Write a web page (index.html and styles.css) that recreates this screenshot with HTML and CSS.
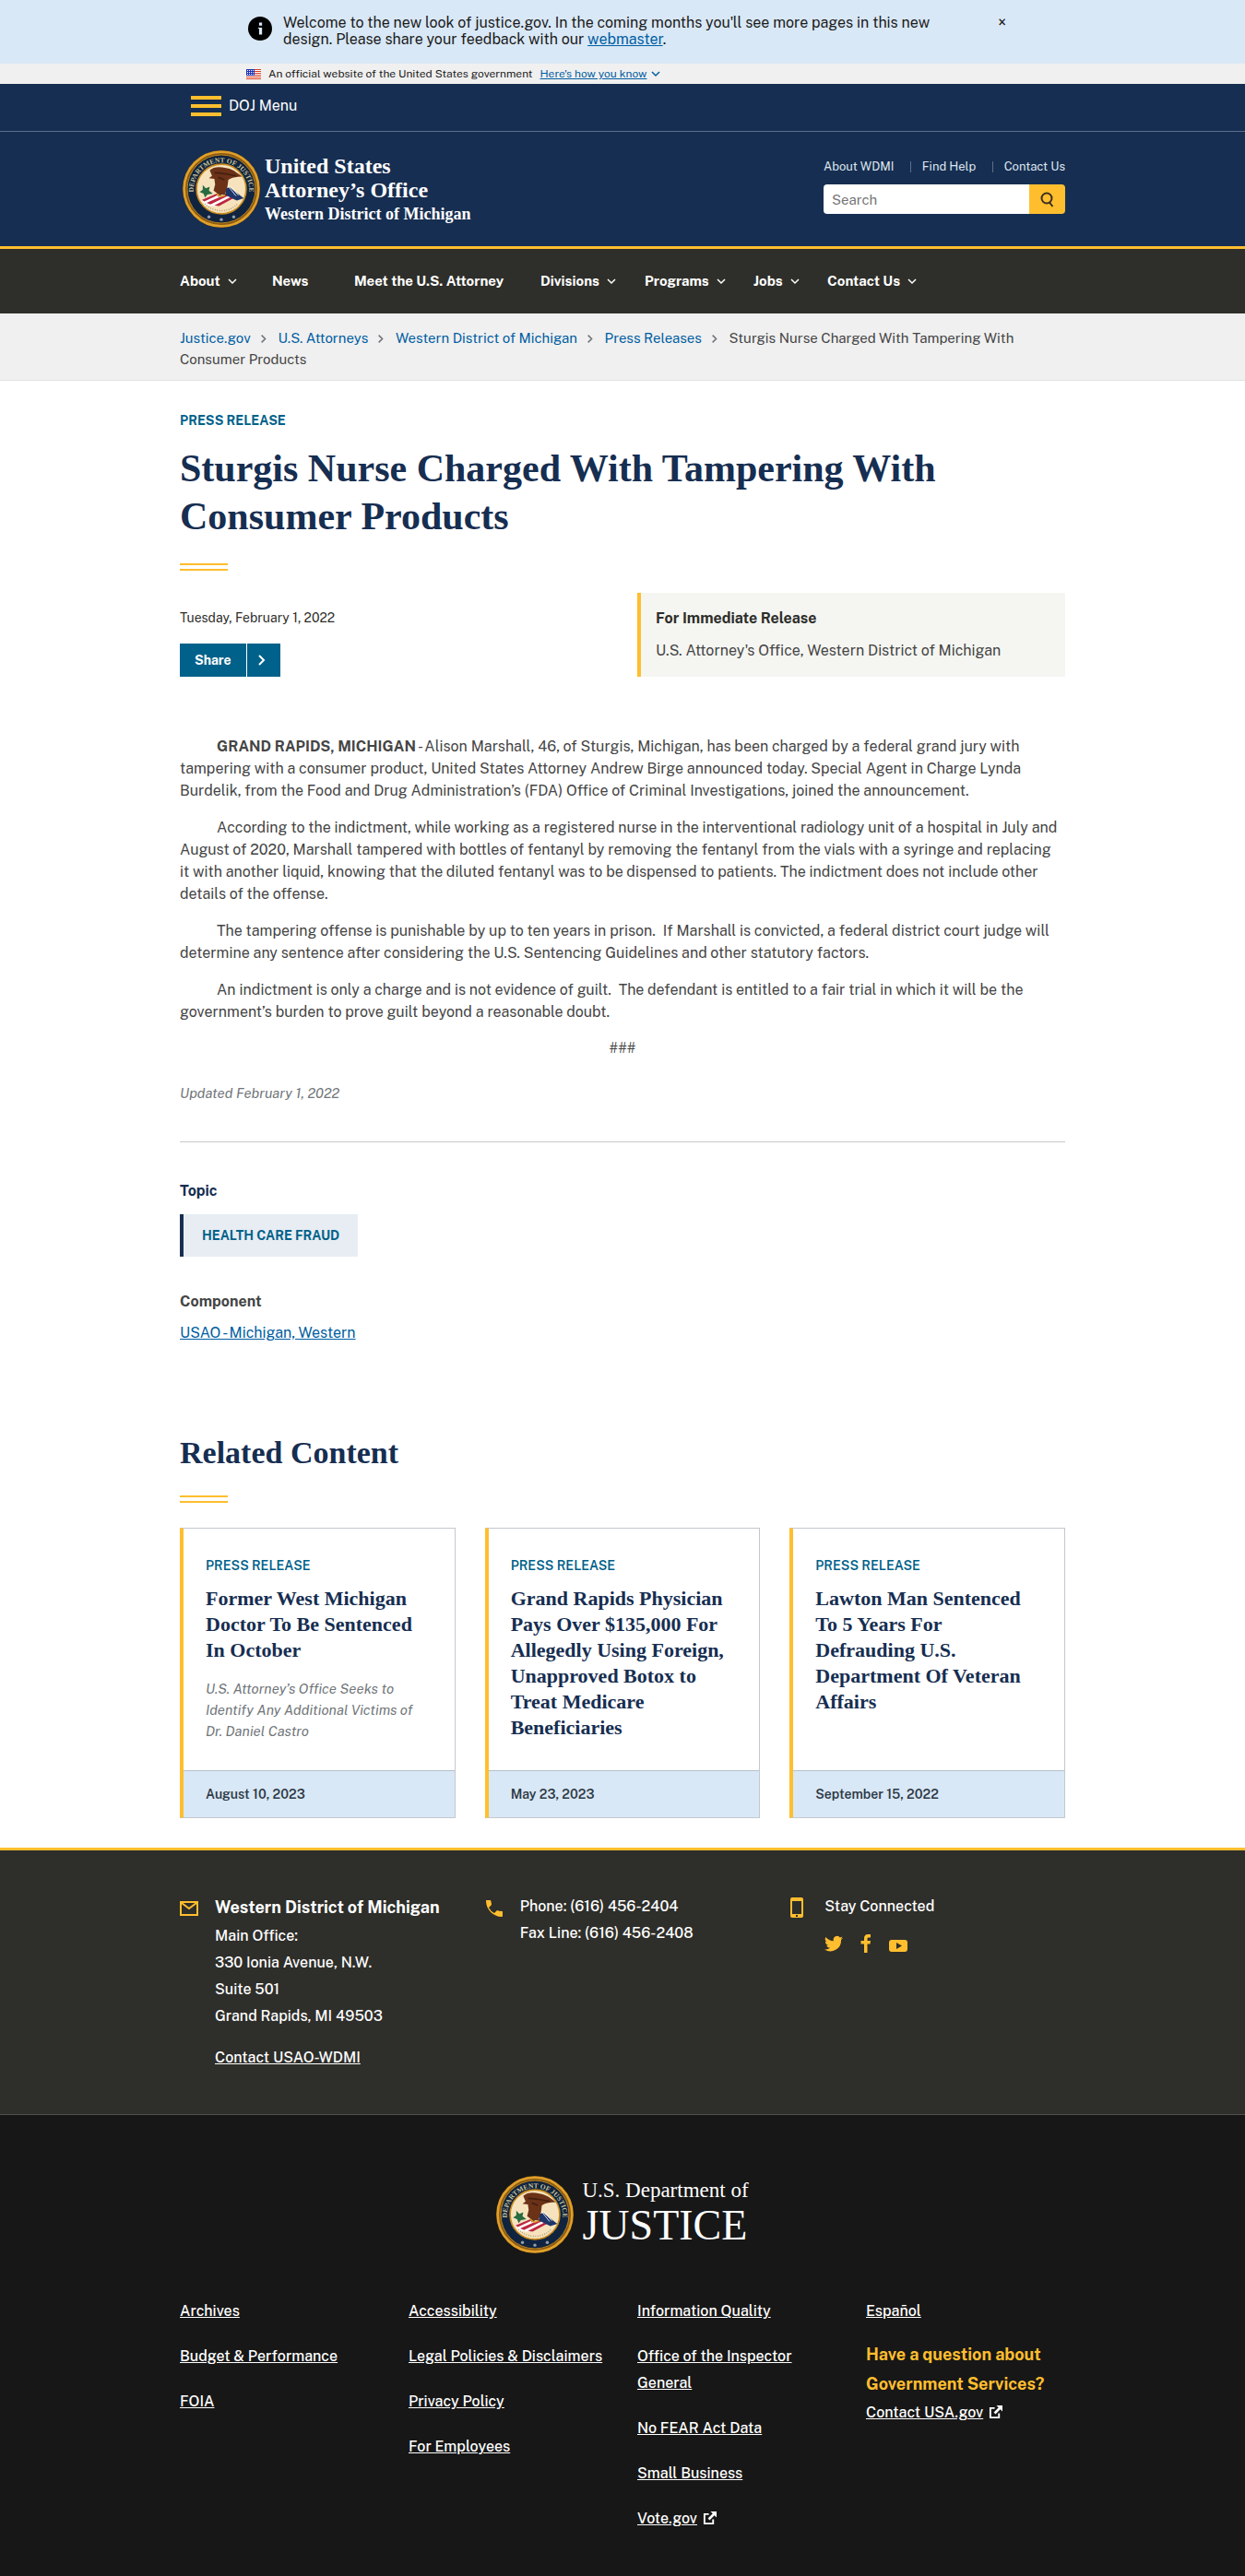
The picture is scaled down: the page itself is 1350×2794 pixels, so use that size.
FILE: index.html
```html
<!DOCTYPE html>
<html lang="en">
<head>
<meta charset="utf-8">
<meta name="viewport" content="width=device-width, initial-scale=1">
<title>Western District of Michigan | Sturgis Nurse Charged With Tampering With Consumer Products | United States Department of Justice</title>
<link rel="stylesheet" href="styles.css">
</head>
<body>
<svg class="sprite" aria-hidden="true">
  <symbol id="down" viewBox="0 0 10 10"><path d="M1 3l4 4 4-4" fill="none" stroke="currentColor" stroke-width="1.500"/></symbol>
  <symbol id="right" viewBox="0 0 10 14"><path d="M2 2l5 5-5 5" fill="none" stroke="currentColor" stroke-width="2"/></symbol>
  <symbol id="external" viewBox="0 0 16 16"><path d="M7 3H2v11h10V9" fill="none" stroke="currentColor" stroke-width="2"/><path d="M9 0h7v7l-2.500-2.500L8 10 6 8l5.500-5.500z" fill="currentColor"/></symbol>
</svg>

<div class="notice" role="region" aria-label="Site notice">
  <svg class="notice-icon" viewBox="0 0 24 24" aria-hidden="true"><circle cx="12" cy="12" r="12" fill="#000"/><path d="M11 6h3v3h-3zM10 11h4v7h-3v-6h-1z" fill="#d9e8f6"/></svg>
  <p class="notice-text">Welcome to the new look of justice.gov. In the coming months you'll see more pages in this new design. Please share your feedback with our <a href="#">webmaster</a>.</p>
  <button class="notice-close" type="button" aria-label="Close">×</button>
</div>

<div class="gov">
  <div class="gov-inner">
    <svg class="flag" viewBox="0 0 16 11" aria-hidden="true"><path fill="#fff" d="M0 0h16v11H0z"/><path fill="#db3e1f" d="M0 0h16v1H0zM0 2h16v1H0zM0 4h16v1H0zM0 6h16v1H0zM0 8h16v1H0zM0 10h16v1H0z"/><path fill="#1e33b1" d="M0 0h9v7H0z"/><path d="M1 1.500h8M1 3.500h8M1 5.500h8" stroke="#fff" stroke-width="1" stroke-dasharray="1 1"/></svg>
    <span>An official website of the United States government</span>
    <button class="gov-toggle" type="button"><span>Here's how you know</span><svg class="chev" aria-hidden="true"><use href="#down"/></svg></button>
  </div>
</div>

<header class="header">
  <div class="menubar">
    <div class="wrap">
      <button class="menu-button" type="button"><span class="burger"></span>DOJ Menu</button>
    </div>
  </div>
  <div class="wrap masthead">
    <a class="brand" href="#">
      <svg class="seal" viewBox="0 0 100 100" aria-hidden="true">
        <g id="seal">
          <circle cx="50" cy="50" r="50" fill="#8a5a12"/>
          <circle cx="50" cy="50" r="48" fill="none" stroke="#e0a02a" stroke-width="3"/>
          <circle cx="50" cy="50" r="44" fill="#10243f" stroke="#c98b1f" stroke-width="1"/>
          <circle cx="50" cy="50" r="32" fill="#f6e3bd" stroke="#c98b1f" stroke-width="2"/>
          <path id="seal-arc" d="M15.500 62 A36 36 0 1 1 84.500 62" fill="none"/>
          <text class="seal-text"><textPath href="#seal-arc" startOffset="50%" text-anchor="middle">DEPARTMENT OF JUSTICE</textPath></text>
          <circle cx="34" cy="86" r="2" fill="#93a0b5"/><circle cx="50" cy="89.500" r="2" fill="#93a0b5"/><circle cx="66" cy="86" r="2" fill="#93a0b5"/>
          <path d="M26 45l4 4 5-2-1 5 5 4-7 1-3 4-2-5-5-2 4-3z" fill="#276b42"/>
          <path d="M25 64l28-12 16 7-26 13-14-1z" fill="#fff"/>
          <path d="M25 64l26-11 3 1-26 12zM31 68l27-12 4 1-26 13zM41 71l24-12 4 1-22 12z" fill="#bd2740"/>
          <path d="M54 49l7-1 18 14-9 3-14-7z" fill="#1d3568"/>
          <path d="M57 44l12 15M62 47l10 11" stroke="#fff" stroke-width="1"/>
          <path d="M35 26c5-5 13-5 21-3 8 1 15 6 21 11-7 0-13 1-18 4l-1 8-3 9 2 4-6-2-5 3-2-5-4-3 2-8-1-7-7-1 4-3z" fill="#6b3218"/>
          <path d="M41 29c9 0 18 2 28 4M46 35l8 3" stroke="#43200f" stroke-width="2" fill="none"/>
          <path d="M44 56l5 4 6-2" stroke="#d79a2e" stroke-width="2" fill="none"/>
          <path d="M29 69c10 12 32 12 42 0" stroke="#a9986d" stroke-width="2" stroke-dasharray="1 2" fill="none"/>
        </g>
      </svg>
      <span class="brand-name">United States<br>Attorney’s Office<span class="brand-district">Western District of Michigan</span></span>
    </a>
    <div class="tools">
      <ul class="quick">
        <li><a href="#">About WDMI</a></li>
        <li><a href="#">Find Help</a></li>
        <li><a href="#">Contact Us</a></li>
      </ul>
      <form class="search" role="search">
        <input type="search" placeholder="Search" aria-label="Search">
        <button type="submit" aria-label="Search"><svg viewBox="0 0 16 18" aria-hidden="true"><circle cx="7" cy="7" r="5.500" fill="none" stroke="#3a2f20" stroke-width="2"/><path d="M9.500 11l4 5" stroke="#3a2f20" stroke-width="2"/></svg></button>
      </form>
    </div>
  </div>
</header>

<nav class="nav" aria-label="Primary">
  <ul class="wrap nav-list">
    <li><button type="button">About<svg class="chev" aria-hidden="true"><use href="#down"/></svg></button></li>
    <li><a href="#">News</a></li>
    <li><a href="#">Meet the U.S. Attorney</a></li>
    <li><button type="button">Divisions<svg class="chev" aria-hidden="true"><use href="#down"/></svg></button></li>
    <li><button type="button">Programs<svg class="chev" aria-hidden="true"><use href="#down"/></svg></button></li>
    <li><button type="button">Jobs<svg class="chev" aria-hidden="true"><use href="#down"/></svg></button></li>
    <li><button type="button">Contact Us<svg class="chev" aria-hidden="true"><use href="#down"/></svg></button></li>
  </ul>
</nav>

<nav class="crumbs" aria-label="Breadcrumbs">
  <ol class="wrap">
    <li><a href="#">Justice.gov</a><svg class="sep" aria-hidden="true"><use href="#right"/></svg></li>
    <li><a href="#">U.S. Attorneys</a><svg class="sep" aria-hidden="true"><use href="#right"/></svg></li>
    <li><a href="#">Western District of Michigan</a><svg class="sep" aria-hidden="true"><use href="#right"/></svg></li>
    <li><a href="#">Press Releases</a><svg class="sep" aria-hidden="true"><use href="#right"/></svg></li>
    <li aria-current="page">Sturgis Nurse Charged With Tampering With Consumer Products</li>
  </ol>
</nav>

<main class="wrap">
  <article>
    <p class="kicker">PRESS RELEASE</p>
    <h1>Sturgis Nurse Charged With Tampering With Consumer Products</h1>
    <div class="rule"></div>
    <div class="meta">
      <div class="meta-left">
        <time datetime="2022-02-01">Tuesday, February 1, 2022</time>
        <button class="share" type="button"><span>Share</span><svg viewBox="0 0 10 14" aria-hidden="true"><path d="M2 2l5 5-5 5" fill="none" stroke="currentColor" stroke-width="2"/></svg></button>
      </div>
      <div class="release">
        <h2>For Immediate Release</h2>
        <p>U.S. Attorney's Office, Western District of Michigan</p>
      </div>
    </div>
    <div class="body">
      <p><strong>GRAND RAPIDS, MICHIGAN</strong> - Alison Marshall, 46, of Sturgis, Michigan, has been charged by a federal grand jury with tampering with a consumer product, United States Attorney Andrew Birge announced today. Special Agent in Charge Lynda Burdelik, from the Food and Drug Administration’s (FDA) Office of Criminal Investigations, joined the announcement.</p>
      <p>According to the indictment, while working as a registered nurse in the interventional radiology unit of a hospital in July and August of 2020, Marshall tampered with bottles of fentanyl by removing the fentanyl from the vials with a syringe and replacing it with another liquid, knowing that the diluted fentanyl was to be dispensed to patients. The indictment does not include other details of the offense.</p>
      <p>The tampering offense is punishable by up to ten years in prison.&nbsp; If Marshall is convicted, a federal district court judge will determine any sentence after considering the U.S. Sentencing Guidelines and other statutory factors.</p>
      <p>An indictment is only a charge and is not evidence of guilt.&nbsp; The defendant is entitled to a fair trial in which it will be the government’s burden to prove guilt beyond a reasonable doubt.</p>
      <p class="end">###</p>
    </div>
    <p class="updated">Updated February 1, 2022</p>
  </article>

  <section class="facts">
    <h2 class="topic-label">Topic</h2>
    <a class="tag" href="#">HEALTH CARE FRAUD</a>
    <h2 class="component-label">Component</h2>
    <a class="component" href="#">USAO - Michigan, Western</a>
  </section>

  <section class="related">
    <h2>Related Content</h2>
    <div class="rule"></div>
    <div class="cards">
      <article class="card">
        <div class="card-body">
          <p class="card-kind">PRESS RELEASE</p>
          <h3>Former West Michigan Doctor To Be Sentenced In October</h3>
          <p class="card-text">U.S. Attorney’s Office Seeks to Identify Any Additional Victims of Dr. Daniel Castro</p>
        </div>
        <p class="card-date">August 10, 2023</p>
      </article>
      <article class="card">
        <div class="card-body">
          <p class="card-kind">PRESS RELEASE</p>
          <h3>Grand Rapids Physician Pays Over $135,000 For Allegedly Using Foreign, Unapproved Botox to Treat Medicare Beneficiaries</h3>
        </div>
        <p class="card-date">May 23, 2023</p>
      </article>
      <article class="card">
        <div class="card-body">
          <p class="card-kind">PRESS RELEASE</p>
          <h3>Lawton Man Sentenced To 5 Years For Defrauding U.S. Department Of Veteran Affairs</h3>
        </div>
        <p class="card-date">September 15, 2022</p>
      </article>
    </div>
  </section>
</main>

<footer>
  <div class="office">
    <div class="wrap office-grid">
      <div class="office-item">
        <svg viewBox="0 0 20 22" aria-hidden="true"><path d="M1 5h18v14H1z" fill="none" stroke="#ffbe2e" stroke-width="2"/><path d="M2 6l8 6 8-6" fill="none" stroke="#ffbe2e" stroke-width="2"/></svg>
        <div>
          <h2>Western District of Michigan</h2>
          <address>Main Office:<br>330 Ionia Avenue, N.W.<br>Suite 501<br>Grand Rapids, MI 49503</address>
          <a href="#">Contact USAO-WDMI</a>
        </div>
      </div>
      <div class="office-item">
        <svg viewBox="0 0 20 22" aria-hidden="true"><path d="M1 3h5q1 3 1 5l-3 3q2 4 6 6l3-3q2 1 6 1v5q0 1-1 1C9 21 1 13 1 4z" fill="#ffbe2e"/></svg>
        <p>Phone: (616) 456-2404<br>Fax Line: (616) 456-2408</p>
      </div>
      <div class="office-item">
        <svg viewBox="0 0 20 22" aria-hidden="true"><path fill-rule="evenodd" d="M3 0h10q2 0 2 2v18q0 2-2 2H3q-2 0-2-2V2q0-2 2-2zM3 4v14h10V4zM7 19v2h2v-2z" fill="#ffbe2e"/></svg>
        <div>
          <p>Stay Connected</p>
          <div class="social">
            <a href="#" aria-label="Twitter"><svg viewBox="0 0 20 20"><path d="M20 4c-1 .400-1.500.500-2.300.700A4 4 0 0 0 19.400 2.500c-.800.500-1.600.800-2.500 1A4 4 0 0 0 9.900 7.200C6.500 7 3.500 5.400 1.400 2.900a4 4 0 0 0 1.300 5.400c-.700 0-1.300-.200-1.800-.500 0 2 1.300 3.700 3.200 4.100-.600.100-1.200.100-1.800 0a4 4 0 0 0 3.800 2.800A8 8 0 0 1 0 16.400 11.600 11.600 0 0 0 18 6c.800-.500 1.500-1.200 2-2z" fill="#ffbe2e"/></svg></a>
            <a href="#" aria-label="Facebook"><svg viewBox="0 0 20 20"><path d="M8 20V10.500H4.500V7H8V4.500C8 1.500 9.500 0 12 0h3v3.500h-2c-1 0-1.500.500-1.500 1.500v2H15l-.500 3.500h-3V20z" fill="#ffbe2e"/></svg></a>
            <a href="#" aria-label="YouTube"><svg viewBox="0 0 20 20"><path fill-rule="evenodd" d="M3 6h14q3 0 3 3v7q0 3-3 3H3q-3 0-3-3V9q0-3 3-3zM8 9v7l6-3.500z" fill="#ffbe2e"/></svg></a>
          </div>
        </div>
      </div>
    </div>
  </div>
  <div class="dept">
    <div class="wrap">
      <a class="dept-brand" href="#">
        <svg class="seal" viewBox="0 0 100 100" aria-hidden="true"><use href="#seal"/></svg>
        <span>U.S. Department of<span class="justice">JUSTICE</span></span>
      </a>
      <div class="links">
        <ul>
          <li><a href="#">Archives</a></li>
          <li><a href="#">Budget &amp; Performance</a></li>
          <li><a href="#">FOIA</a></li>
        </ul>
        <ul>
          <li><a href="#">Accessibility</a></li>
          <li><a href="#">Legal Policies &amp; Disclaimers</a></li>
          <li><a href="#">Privacy Policy</a></li>
          <li><a href="#">For Employees</a></li>
        </ul>
        <ul>
          <li><a href="#">Information Quality</a></li>
          <li><a href="#">Office of the Inspector General</a></li>
          <li><a href="#">No FEAR Act Data</a></li>
          <li><a href="#">Small Business</a></li>
          <li><a href="#">Vote.gov</a><svg class="ext" aria-hidden="true"><use href="#external"/></svg></li>
        </ul>
        <div>
          <a href="#">Español</a>
          <h2>Have a question about Government Services?</h2>
          <a href="#">Contact USA.gov</a><svg class="ext" aria-hidden="true"><use href="#external"/></svg>
        </div>
      </div>
    </div>
  </div>
</footer>
</body>
</html>
```
FILE: styles.css
```css
* { box-sizing: border-box; }

body {
  margin: 0;
  background: #fff;
  color: #454545;
  font: 16px/24px "Public Sans", Inter, "Liberation Sans", sans-serif;
}

h1, h2, h3, p, ul, ol { margin: 0; padding: 0; }
ul, ol { list-style: none; }
a { color: #005ea2; }
button { font: inherit; border: 0; padding: 0; background: none; color: inherit; }
svg { flex: none; }

.sprite { position: absolute; width: 0; height: 0; }
.wrap { max-width: 960px; margin: 0 auto; }
.chev { width: 10px; height: 10px; }

.seal-text {
  font: bold 9px "Liberation Serif", serif;
  fill: #c9c29a;
}

/* Notice */
.notice {
  display: flex;
  align-items: flex-start;
  padding: 16px max(24px, calc(50% - 416px)) 17px max(24px, calc(50% - 406px));
  background: #d9e8f6;
  color: #1b1b1b;
}
.notice-icon { width: 26px; height: 26px; margin: 2px 12px 0 0; }
.notice-text { flex: 1; line-height: 18px; }
.notice-close { margin-left: 48px; line-height: 18px; font-weight: 500; }

/* Government banner */
.gov { background: #f0f0f0; color: #1b1b1b; font-size: 12px; line-height: 22px; }
.gov-inner {
  display: flex;
  align-items: center;
  gap: 8px;
  max-width: 816px;
  margin: 0 auto;
}
.flag { width: 16px; height: 11px; }
.gov-toggle { display: flex; align-items: center; gap: 5px; color: #005ea2; }
.gov-toggle span { text-decoration: underline; }

/* Header */
.header { background: #162e51; color: #fff; border-bottom: 3px solid #ffbe2e; }
.menubar { border-bottom: 1px solid #5c6f8c; }
.menu-button {
  display: flex;
  align-items: center;
  gap: 8px;
  height: 51px;
  padding: 0 12px 3px;
}
.burger {
  width: 33px;
  height: 22px;
  border-top: 4px solid #ffbe2e;
  border-bottom: 4px solid #ffbe2e;
  background: linear-gradient(#ffbe2e, #ffbe2e) center / 100% 4px no-repeat;
}
.masthead { display: flex; justify-content: space-between; height: 124px; }
.brand {
  display: flex;
  align-items: center;
  gap: 5px;
  padding-left: 3px;
  color: #fff;
  text-decoration: none;
}
.seal { width: 84px; height: 84px; }
.brand-name { padding-top: 2px; font: bold 24px/26px "Liberation Serif", serif; }
.brand-district { display: block; font-size: 18px; }

.tools { width: 262px; padding-top: 28px; }
.quick { display: flex; justify-content: space-between; font-size: 13px; line-height: 20px; }
.quick a { color: #dfe6f0; text-decoration: none; }
.quick li + li::before {
  content: "";
  float: left;
  height: 12px;
  margin: 4px 12px 0 0;
  border-left: 1px solid #5c6f8c;
}
.search { display: flex; height: 32px; margin-top: 9px; }
.search input {
  flex: 1;
  min-width: 0;
  border: 0;
  border-radius: 4px 0 0 4px;
  padding: 0 9px;
  font: 15px "Public Sans", Inter, sans-serif;
}
.search input::placeholder { color: #757575; }
.search button { width: 39px; border-radius: 0 4px 4px 0; background: #ffbe2e; }
.search svg { width: 16px; height: 18px; vertical-align: middle; }

/* Primary navigation */
.nav { background: #2e2e2a; color: #fff; }
.nav-list {
  display: grid;
  grid-template-columns: 100px 89px 202px 113px 118px 80px auto;
  padding: 23px 0;
  font-size: 15px;
  font-weight: 700;
  white-space: nowrap;
}
.nav-list a { color: #fff; text-decoration: none; }
.nav-list .chev { margin-left: 8px; }

/* Breadcrumbs */
.crumbs {
  padding: 15px 0 11px;
  background: #f0f0f0;
  border-bottom: 1px solid #dfe1e2;
  font-size: 15px;
  line-height: 23px;
}
.crumbs li { display: inline; }
.crumbs a { text-decoration: none; }
.sep { width: 8px; height: 11px; margin: 0 8px 0 10px; color: #71767a; vertical-align: -1px; }

/* Article */
.kicker { margin-top: 31px; color: #00618a; font-size: 14px; font-weight: 700; }
h1 {
  margin-top: 14px;
  color: #162e51;
  font: bold 42px/52px "Liberation Serif", serif;
}
.rule { width: 52px; height: 8px; border: solid #ffbe2e; border-width: 2px 0; }
h1 + .rule { margin-top: 25px; }
.meta { display: grid; grid-template-columns: 1fr 464px; margin-top: 24px; }
.meta-left { display: flex; flex-direction: column; align-items: flex-start; }
time { margin-top: 15px; color: #2e2e2a; font-size: 14px; }
.share {
  display: flex;
  align-items: center;
  height: 36px;
  margin-top: 16px;
  background: #00618a;
  color: #fff;
  font-size: 14px;
  font-weight: 700;
}
.share span { padding: 0 16px; line-height: 36px; border-right: 1px solid #fff; }
.share svg { width: 10px; height: 14px; margin: 0 15px 0 11px; }
.release {
  padding: 16px;
  border-left: 4px solid #ffbe2e;
  background: #f5f6f2;
}
.release h2 { color: #2e2e2a; font-size: 16px; line-height: 24px; }
.release p { margin-top: 11px; }
.body { margin-top: 64px; }
.body p { margin-bottom: 16px; padding-right: 4px; text-indent: 40px; }
.body .end { padding: 0; text-align: center; text-indent: 0; }
.updated { margin-top: 24px; color: #71767a; font-size: 15px; font-style: italic; }

/* Topic and component */
.facts { margin-top: 40px; padding-top: 41px; border-top: 1px solid #c9c9c9; }
.facts h2 { font-size: 16px; line-height: 24px; }
.facts a { display: table; }
.topic-label { color: #162e51; }
.tag {
  margin: 13px 0 37px;
  padding: 11px 20px;
  border-left: 4px solid #162e51;
  background: #e7edf3;
  color: #00618a;
  font-size: 14px;
  font-weight: 700;
  text-decoration: none;
}
.component { margin-top: 10px; }

/* Related content */
.related { margin-top: 98px; }
.related h2 { color: #162e51; font: bold 34px/40px "Liberation Serif", serif; }
.related .rule { margin: 26px 0 27px; }
.cards { display: grid; grid-template-columns: repeat(3, 1fr); gap: 32px; }
.card {
  display: flex;
  flex-direction: column;
  border: 1px solid #c3c8cd;
  border-left: 4px solid #ffbe2e;
}
.card-body { flex: 1; padding: 28px 24px 31px; }
.card-kind { color: #00618a; font-size: 14px; font-weight: 600; }
.card h3 {
  margin-top: 10px;
  color: #162e51;
  font: bold 22px/28px "Liberation Serif", serif;
}
.card-text {
  margin-top: 16px;
  color: #71767a;
  font-size: 15px;
  line-height: 23px;
  font-style: italic;
}
.card-date {
  padding: 13px 24px;
  border-top: 1px solid #b5bfca;
  background: #d9e8f6;
  color: #2e3a46;
  font-size: 14px;
  font-weight: 600;
}

/* Office footer */
.office {
  margin-top: 32px;
  padding: 46px 0 47px;
  border-top: 3px solid #ffbe2e;
  border-bottom: 1px solid #50504c;
  background: #2e2e2a;
  color: #fff;
  font-weight: 500;
  line-height: 29px;
}
.office a { color: #fff; }
.office-grid { display: grid; grid-template-columns: repeat(3, 1fr); gap: 32px; }
.office-item { display: flex; gap: 18px; }
.office-item > svg { width: 20px; height: 22px; margin-top: 5px; }
.office h2 { font-size: 18px; line-height: 32px; white-space: nowrap; }
.office address { margin-bottom: 16px; font-style: normal; }
.social { display: flex; gap: 15px; margin-top: 16px; }
.social svg { display: block; width: 20px; height: 20px; }

/* Department footer */
.dept { padding: 66px 0 48px; background: #171717; color: #fff; line-height: 29px; }
.dept-brand {
  display: flex;
  justify-content: center;
  align-items: center;
  gap: 9px;
  color: #fff;
  font: 23px/24px "Liberation Serif", serif;
  text-decoration: none;
}
.justice { display: block; font-size: 46px; line-height: 52px; }
.links {
  display: grid;
  grid-template-columns: repeat(4, 1fr);
  gap: 32px;
  margin-top: 48px;
  font-weight: 500;
}
.links a { color: #fff; }
.links li + li { margin-top: 20px; }
.links h2 { margin-top: 17px; color: #ffbe2e; font-size: 18px; line-height: 32px; }
.ext { width: 15px; height: 15px; margin-left: 6px; vertical-align: -2px; }
```
